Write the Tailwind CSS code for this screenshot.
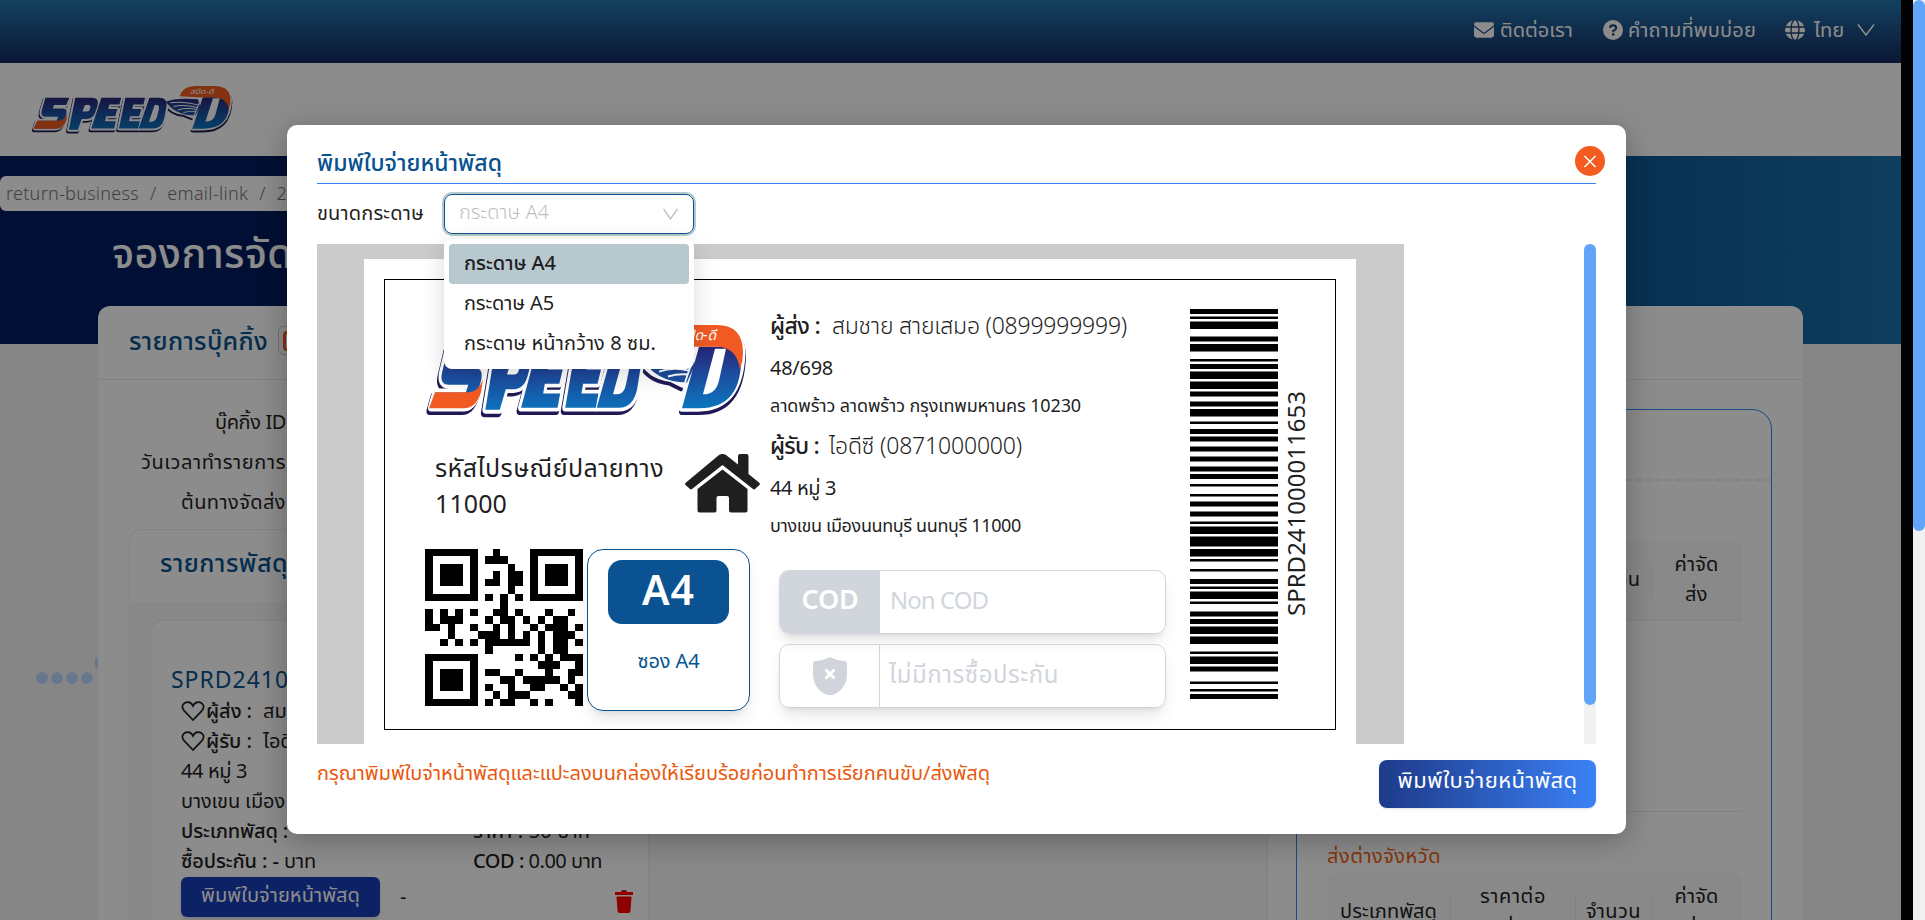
<!DOCTYPE html>
<html lang="th">
<head>
<meta charset="utf-8">
<title>SPEED-D</title>
<script src="https://cdn.jsdelivr.net/npm/@tailwindcss/browser@4"></script>
</head>
<body class="relative h-[920px] w-[1925px] overflow-hidden bg-black font-['Noto_Sans','Noto_Sans_Thai',sans-serif] text-[#1f1f1f]">

<svg class="absolute h-0 w-0">
  <defs>
    <linearGradient id="ink" gradientUnits="userSpaceOnUse" x1="0" y1="22" x2="0" y2="84"><stop offset="0" stop-color="#2b2171"/><stop offset=".45" stop-color="#1d4a9c"/><stop offset="1" stop-color="#0c74bd"/></linearGradient>
    <g id="word">
      <path d="M27 25h45l-6 13H43l-2 6h19q9 0 6 11l-4 11q-5 14-17 14H7l5-14h36l3-7H28q-11 0-8-11z"/>
      <path d="M83 25h31q14 0 11 13l-4 12q-4 13-17 13h-9l-7 19H71z"/>
      <path d="M132 25h37l-3 12h-19l-2 8h17l-4 13h-17l-2 9h20l-3 13h-43z"/>
      <path d="M177 25h37l-3 12h-19l-2 8h17l-4 13h-17l-2 9h20l-3 13h-36z"/>
      <path d="M222 25h18q17 0 14 16l-4 20q-4 19-22 19h-26z"/>
    </g>
    <path id="wing" d="M217 33Q232 24 268 28L279 24 270 62 260 62 248 56Q226 54 217 33z"/>
    <path id="dee" d="M240 22Q246 3 266 3h28q24 0 25 27-2 56-44 56h-16l14-62z"/>
  </defs>
  <symbol id="logo" viewBox="2 0 322 104" preserveAspectRatio="none">
    <g fill="#1f1a55" stroke="#1f1a55" stroke-width="7" stroke-linejoin="round" transform="translate(-1.500 3.500)">
      <use href="#word" transform="matrix(.85 0 0 1.1 2 -2.500)"/><use href="#wing"/><use href="#dee" transform="translate(2 0)"/>
    </g>
    <g fill="#fff" stroke="#fff" stroke-width="7" stroke-linejoin="round">
      <use href="#word" transform="matrix(.85 0 0 1.1 2 -2.500)"/><use href="#wing"/><use href="#dee"/>
    </g>
    <g fill="url(#ink)">
      <use href="#word" transform="matrix(.85 0 0 1.1 2 -2.500)"/>
      <path d="M217 33Q232 24 268 28L272 42 264 60Q232 60 217 33z"/>
      <path fill-rule="evenodd" d="M276 24h30l12 8q2 54-42 54h-17zM292 26l-12 46q13 0 16-14l7-32z"/>
    </g>
    <g fill="#fff"><path d="M88 39l-4 13h7q4 0 5-5 2-8-2-8z"/><path d="M199 39l-9 33h4q7 0 9-10l3-15q1-8-4-8z"/></g>
    <path fill="#f15a22" d="M239 22Q244 2 264 2h30q26 0 26 28 0 9-3 17-3-22-22-23h-28z"/>
    <path fill="#f15a22" d="M12 70h32q12 0 16-14l-2 14q-5 16-16 16H6z"/>
    <g fill="none" stroke="#fff" stroke-width="1.900"><path d="M224 35q22-4 44 4"/><path d="M229 42q18-4 38 2"/><path d="M236 49q14-5 30-1"/><path d="M245 54q10-3 20-2"/><path d="M272 30 262 60"/></g>
    <text x="255" y="17" font-size="14" fill="#fff" font-style="italic" textLength="38" lengthAdjust="spacingAndGlyphs">สปีด-ดี</text>
  </symbol>
  <symbol id="heart" viewBox="0 0 24 20"><path d="M12 19 3 9.600Q.2 6 2.300 3.200 4 1 7 1.100q3.500.2 5 3.700Q13.500 1.300 17 1.100q3-.1 4.700 2.100Q23.800 6 21 9.600z" fill="none" stroke="#1f1f1f" stroke-width="1.700"/></symbol>
</svg>

<!-- Page -->
<div class="flex h-full w-[1901px] flex-col overflow-hidden bg-[#f5f5f5]">
  <header class="flex h-[63px] shrink-0 items-center justify-end bg-linear-to-b from-[#2478b0] to-[#142a60] pb-[3px] pr-[26px] text-[20px] text-white">
    <svg class="mr-[6px] h-[16px] w-[20px]" viewBox="0 0 512 400" preserveAspectRatio="none"><path fill="#fff" d="M48 8C21 8 0 29 0 56c0 15 7 29 19 38l218 163c11 9 27 9 38 0L493 94c12-9 19-23 19-38 0-27-21-48-48-48zM0 120v208c0 35 29 64 64 64h384c35 0 64-29 64-64V120L294 283c-23 17-53 17-76 0z"/></svg>
    <span data-w="73">ติดต่อเรา</span>
    <svg class="ml-[30px] mr-[5px] h-5 w-5" viewBox="0 0 20 20"><circle cx="10" cy="10" r="10" fill="#fff"/><path d="M7 7.800Q7.300 5.200 10.200 5.200q3 .2 3 2.700 0 1.500-3 3.100v1.200" fill="none" stroke="#18416f" stroke-width="2"/><circle cx="10.200" cy="14.500" r="1.300" fill="#18416f"/></svg>
    <span data-w="128">คำถามที่พบบ่อย</span>
    <svg class="ml-[29px] mr-[9px] h-5 w-5" viewBox="0 0 20 20"><circle cx="10" cy="10" r="10" fill="#fff"/><g fill="none" stroke="#18416f" stroke-width="1.300"><ellipse cx="10" cy="10" rx="4" ry="10.500"/><path d="M0 7h20M0 13h20"/></g></svg>
    <span data-w="30">ไทย</span>
    <svg class="ml-[13px] h-[14px] w-[18px]" viewBox="0 0 18 14"><path d="M1 1.500 9 12l8-10.500" fill="none" stroke="#fff" stroke-width="1.500"/></svg>
  </header>
  <div class="flex h-[93px] shrink-0 items-center bg-white pl-[31px]"><svg class="mt-[3px] h-[53px] w-[202px]"><use href="#logo"/></svg></div>
  <section class="flex h-[188px] shrink-0 flex-col bg-linear-to-r from-[#001d5d] from-50% to-[#1b71ab] pt-5">
    <div class="flex h-[35px] w-[700px] items-center rounded-md bg-white pl-[6px] text-[18px] font-light text-[#777]"><span data-w="133">return-business</span><span class="mx-[11px]">/</span><span data-w="81">email-link</span><span class="mx-[11px]">/</span><span>241000011653</span></div>
    <h1 class="mt-[11px] flex h-[62px] items-center pl-[112px] text-[41px] font-medium text-white"><span data-w="228">จองการจัดส่ง</span></h1>
  </section>
  <main class="relative -mt-[38px] ml-[98px] h-[700px] w-[1705px] shrink-0 rounded-xl bg-white">
    <div class="flex h-[74px] items-center border-b border-[#ebebeb] pb-1 pl-[31px] text-[25px] font-medium text-[#08528f]">
      <span data-w="139">รายการบุ๊คกิ้ง</span>
      <span class="ml-[10px] flex size-[29px] items-center rounded-md border border-[#ccc] pl-1"><span class="h-5 w-[18px] rounded border-[3px] border-[#f15a22]"></span></span>
    </div>
    <div class="flex">
      <div class="ml-[31px] w-[1139px] pt-[22px] text-[20px]">
        <div class="flex w-[157px] flex-col items-end">
          <div class="flex h-10 items-center"><span data-w="71">บุ๊คกิ้ง ID</span></div>
          <div class="flex h-10 items-center"><span data-w="145">วันเวลาทำรายการ</span></div>
          <div class="flex h-10 items-center"><span data-w="105">ต้นทางจัดส่ง</span></div>
        </div>
        <section class="mt-[7px] h-[400px] rounded-xl border border-[#ededed] bg-[#f7f7f7]">
          <div class="flex h-[72px] items-center rounded-t-xl bg-white pb-[6px] pl-[30px] text-[25px] font-medium text-[#08528f]"><span data-w="128">รายการพัสดุ</span></div>
          <div class="ml-[20px] mt-[18px] h-[340px] w-[499px] rounded-xl border border-[#ededed] bg-white pt-[41px]">
            <div class="flex h-[35px] items-center pl-5 text-[23px] text-[#08528f]"><span data-w="231">SPRD241000011653</span></div>
            <div class="-mt-px pl-[30px]">
              <div class="flex h-[30px] items-center"><svg class="mr-px h-[22px] w-6"><use href="#heart"/></svg><b class="mr-[11px] font-medium" data-w="46">ผู้ส่ง :</b><span>สมชาย</span></div>
              <div class="flex h-[30px] items-center"><svg class="mr-px h-[22px] w-6"><use href="#heart"/></svg><b class="mr-[11px] font-medium" data-w="46">ผู้รับ :</b><span>ไอดีซี</span></div>
              <div class="flex h-[30px] items-center"><span data-w="66">44 หมู่ 3</span></div>
              <div class="flex h-[30px] items-center"><span data-w="104">บางเขน เมือง</span></div>
              <div class="flex h-[30px] items-center"><b class="w-[292px] font-medium"><span data-w="107">ประเภทพัสดุ :</span></b><span data-w="117"><b class="font-medium">ราคา :</b> 50 บาท</span></div>
              <div class="flex h-[30px] items-center"><span class="w-[292px]"><span data-w="135"><b class="font-medium">ซื้อประกัน : -</b> บาท</span></span><span data-w="129"><b class="font-medium">COD :</b> 0.00 บาท</span></div>
              <div class="mt-px flex h-10 items-center">
                <span class="flex h-10 w-[199px] items-center justify-center rounded-md bg-blue-800 pb-1 text-white shadow-md"><span data-w="159">พิมพ์ใบจ่ายหน้าพัสดุ</span></span>
                <span class="ml-[20px] w-[215px]">-</span>
                <svg class="mt-2 h-[23px] w-[18px]" viewBox="0 0 18 23"><path fill="#f00" d="M0 2h6l1-2h4l1 2h6v3H0zM1.500 6.500h15L15.500 21q-.2 2-2 2h-9q-1.800 0-2-2z"/></svg>
              </div>
            </div>
          </div>
        </section>
      </div>
      <aside class="ml-[28px] mt-[29px] h-[600px] w-[476px] rounded-[20px] border border-[#3b82f6] text-[20px]">
        <div class="h-[71px] border-b-2 border-dashed border-[#ededed]"></div>
        <div class="ml-[30px] mt-[60px] w-[415px]">
          <div class="flex h-[80px] items-center rounded-t-lg border-b border-[#ebebeb] bg-[#f9f9f9]">
            <span class="w-[248px]"></span>
            <span class="flex w-[76px] justify-center pb-1"><span data-w="55">จำนวน</span></span><span class="h-8 w-px bg-[#ebebeb]"></span>
            <span class="flex w-[89px] flex-col items-center pb-1 leading-[30px]"><span data-w="44">ค่าจัด</span><span data-w="23">ส่ง</span></span>
          </div>
          <div class="h-[191px] border-b border-[#ebebeb]"></div>
          <div class="mt-[26px] flex h-[36px] items-center text-[#f2600f]"><span data-w="114">ส่งต่างจังหวัด</span></div>
          <div class="mt-[-1px] flex h-[80px] items-center rounded-t-lg bg-[#f9f9f9] pb-1">
            <span class="flex w-[123px] justify-center"><span data-w="97">ประเภทพัสดุ</span></span><span class="h-8 w-px bg-[#ebebeb]"></span>
            <span class="flex w-[124px] flex-col items-center leading-[30px]"><span data-w="66">ราคาต่อ</span><span>กล่อง</span></span><span class="h-8 w-px bg-[#ebebeb]"></span>
            <span class="flex w-[75px] justify-center"><span data-w="55">จำนวน</span></span><span class="h-8 w-px bg-[#ebebeb]"></span>
            <span class="flex w-[89px] flex-col items-center leading-[30px]"><span data-w="44">ค่าจัด</span><span data-w="23">ส่ง</span></span>
          </div>
        </div>
      </aside>
    </div>
  </main>
</div>
<!-- Truck trail dots in the page margin -->
<div class="absolute left-9 top-[672px] flex gap-[3px]"><i class="size-3 rounded-full bg-blue-200"></i><i class="size-3 rounded-full bg-blue-200"></i><i class="size-3 rounded-full bg-blue-200"></i><i class="size-3 rounded-full bg-blue-200"></i></div>
<div class="absolute left-[95px] top-[657px] h-3 w-[3px] rounded-l-full bg-blue-200"></div>

<div class="absolute inset-y-0 left-0 w-[1913px] bg-black/45"></div>
<!-- Page scrollbar -->
<div class="absolute right-0 top-0 h-full w-3 bg-[#f1f1f1]"><div class="h-[531px] rounded-full bg-[#60a5fa]"></div></div>

<!-- Print dialog -->
<div class="absolute left-[287px] top-[125px] flex h-[709px] w-[1339px] flex-col rounded-[10px] bg-white px-[30px] shadow-[0_6px_30px_rgba(0,0,0,.28)]">
  <div class="flex h-[59px] shrink-0 items-end justify-between border-b border-[#3b82f6] text-[23px] font-medium text-[#08528f]">
    <span class="flex h-[41px] items-center"><span data-w="185">พิมพ์ใบจ่ายหน้าพัสดุ</span></span>
    <svg class="-mr-[9px] mb-[7px] size-[30px]" viewBox="0 0 30 30"><circle cx="15" cy="15" r="15" fill="#f45b20"/><path d="m9.500 10 11 11m0-11-11 11" stroke="#fff" stroke-width="1.500"/></svg>
  </div>
  <div class="flex h-[60px] shrink-0 items-center text-[20px]">
    <span class="w-[127px] pb-[3px]"><span data-w="107">ขนาดกระดาษ</span></span>
    <div class="flex h-10 w-[250px] items-center justify-between rounded-lg border border-[#08528f] pl-[14px] pr-[15px] font-light text-[#bfbfbf] ring-2 ring-[#b8c8cf]"><span class="-mt-[4px]" data-w="90">กระดาษ A4</span><svg class="h-[12px] w-[15px]" viewBox="0 0 15 12"><path d="m.5.8 7 10 7-10" fill="none" stroke="#bbb" stroke-width="1.300"/></svg></div>
  </div>
  <div class="flex h-[500px] shrink-0 justify-between">
    <div class="h-[500px] w-[1087px] bg-[#cbcbcb] pl-[47px] pt-[15px]">
      <div class="h-[485px] w-[992px] bg-white pl-5 pt-5">
        <div class="flex h-[451px] w-[952px] border border-black">
          <div class="w-[385px] pl-8">
            <div class="flex h-[169px] items-start pl-[8px] pt-[43px]"><svg class="h-[103px] w-[322px]"><use href="#logo"/></svg></div>
            <div class="flex h-[100px]">
              <div class="flex w-[268px] flex-col items-start pl-[18px] text-[25px] leading-[36px]"><span data-w="229">รหัสไปรษณีย์ปลายทาง</span><span data-w="72">11000</span></div>
              <svg class="mt-[5px] h-[59px] w-[75px]" viewBox="0 0 75 59"><path fill="#1f1f1f" d="M34 1q3.500-2 7 0l12 9.500V2q0-2 2-2h6.500q2 0 2 2v18l10.500 8.500q1.500 1 .5 2.500L70.500 34.500q-1 1.500-2.500.5L37.500 11 7 35q-1.500 1-2.500-.5L.5 31q-1-1.500.5-2.500zM37.500 15.500 62.500 35v21.500q0 2-2 2H46q-2 0-2-2V44q0-2-2-2h-8.500q-2 0-2 2v12.500q0 2-2 2H14.500q-2 0-2-2V35z"/></svg>
            </div>
            <div class="flex pl-2">
              <svg id="qr" class="h-[157px] w-[158px]" viewBox="0 0 21 21" preserveAspectRatio="none" shape-rendering="crispEdges"></svg>
              <div class="ml-1 flex h-[162px] w-[163px] flex-col items-center rounded-2xl border border-[#08528f] pt-[10px] text-[#08528f] shadow-lg">
                <div class="flex h-16 w-[121px] items-center justify-center rounded-[14px] bg-[#0a5291] pb-1 text-[41px] font-semibold text-white"><span data-w="53">A4</span></div>
                <div class="mt-[21px] flex h-8 items-center text-[20px]"><span data-w="62">ซอง A4</span></div>
              </div>
            </div>
          </div>
          <div class="w-[420px] pt-[22px]">
            <div class="flex h-[46px] items-center text-[23px] font-light"><b class="mr-3 font-medium" data-w="50">ผู้ส่ง :</b><span data-w="295">สมชาย สายเสมอ (0899999999)</span></div>
            <div class="flex h-[39px] items-center pt-px text-[20px]"><span data-w="63">48/698</span></div>
            <div class="flex h-[36px] items-center text-[18px]"><span data-w="311">ลาดพร้าว ลาดพร้าว กรุงเทพมหานคร 10230</span></div>
            <div class="flex h-[45px] items-center text-[23px] font-light"><b class="mr-[10px] font-medium" data-w="49">ผู้รับ :</b><span data-w="193">ไอดีซี (0871000000)</span></div>
            <div class="flex h-[39px] items-center pt-px text-[20px]"><span data-w="66">44 หมู่ 3</span></div>
            <div class="flex h-[36px] items-center text-[18px]"><span data-w="251">บางเขน เมืองนนทบุรี นนทบุรี 11000</span></div>
            <div class="ml-[9px] mt-[27px] flex h-16 w-[387px] overflow-hidden rounded-[10px] border border-gray-300 text-[24px] text-gray-300 shadow-lg">
              <div class="flex w-[100px] items-center justify-center bg-gray-300 pb-[5px] text-[27px] font-semibold text-white"><span data-w="57">COD</span></div>
              <div class="flex items-center pb-[5px] pl-[10px]"><span data-w="98">Non COD</span></div>
            </div>
            <div class="ml-[9px] mt-[10px] flex h-16 w-[387px] rounded-[10px] border border-gray-300 text-[24px] text-gray-300 shadow-lg">
              <div class="flex w-[100px] items-center justify-center border-r border-gray-300"><svg class="h-[38px] w-[34px]" viewBox="0 0 34 38"><path fill="#d1d5db" d="M17 0q8 4 15 4 2 .5 2 3v10q0 14-13 20.500-4 1-8 0Q0 31 0 17V7q0-2.500 2-3 7 0 15-4z"/><path d="m12.500 12.500 9 9m0-9-9 9" stroke="#fff" stroke-width="3"/></svg></div>
              <div class="flex items-center pb-[5px] pl-[9px]"><span data-w="170">ไม่มีการซื้อประกัน</span></div>
            </div>
          </div>
          <div class="flex pt-[29px]">
            <svg id="bars" class="h-[390px] w-[88px]" viewBox="0 0 1 156" preserveAspectRatio="none"></svg>
            <div class="ml-[2px] mt-[82px] flex h-[226px] w-[32px] rotate-180 items-center justify-center text-[24px] [writing-mode:vertical-rl]">SPRD241000011653</div>
          </div>
        </div>
      </div>
    </div>
    <div class="h-full w-3 bg-[#f1f1f1]"><div class="h-[461px] rounded-full bg-[#60a5fa]"></div></div>
  </div>
  <div class="flex justify-between pt-[15px]">
    <div class="flex h-[27px] items-center text-[20px] text-[#ea580c]"><span data-w="673">กรุณาพิมพ์ใบจ่าหน้าพัสดุและแปะลงบนกล่องให้เรียบร้อยก่อนทำการเรียกคนขับ/ส่งพัสดุ</span></div>
    <div class="mt-px flex h-12 w-[217px] items-center justify-center rounded-lg bg-linear-to-r from-[#1e3a8a] to-[#3b82f6] pb-[10px] text-[22px] text-white shadow"><span data-w="180">พิมพ์ใบจ่ายหน้าพัสดุ</span></div>
  </div>
</div>

<!-- Paper size menu -->
<div class="absolute left-[444px] top-[239px] flex h-[130px] w-[250px] flex-col rounded-lg bg-white p-[5px] text-[20px] shadow-[0_6px_24px_rgba(0,0,0,.15)]">
  <div class="flex h-10 items-center rounded bg-[#b8c8cf] pb-[3px] pl-[15px] font-medium"><span data-w="92">กระดาษ A4</span></div>
  <div class="flex h-10 items-center pb-[3px] pl-[15px]"><span data-w="90">กระดาษ A5</span></div>
  <div class="flex h-10 items-center pb-[3px] pl-[15px]"><span data-w="192">กระดาษ หน้ากว้าง 8 ซม.</span></div>
</div>

<script>
const qrRows = [
 "111111100100001111111","100000101110001000001","101110100001001011101","101110100101101011101","101110101101101011101","100000100001001000001","111111101010101111111",
 "000000000010000000000","101010100110100010010","101110001011010101100","110100100101001011101","000100011101010101110","001010101111110101101","000000001000000101100",
 "111111100000101010111","100000100000000111001","101110101100100010011","101110100011011111010","101110101001001100101","100000100101110000011","111111101011001010001"];
document.getElementById('qr').innerHTML = '<path d="' + qrRows.map((r, y) => [...r].map((c, x) => c === '1' ? `M${x} ${y}h1v1h-1z` : '').join('')).join('') + '"/>';
const bars = [0,2,3,4,5,8,11,13,14,17,20,21,22,24,25,28,29,32,33,35,37,39,40,43,45,46,48,50,51,53,55,57,59,61,63,65,66,68,70,71,74,75,77,79,81,83,85,86,87,90,91,95,96,99,100,101,104,105,108,110,111,112,113,116,117,118,121,123,124,126,127,130,131,134,137,138,139,142,143,145,149,150,152,153,154,156];
let d = '';
for (let i = 0; i < bars.length; i += 2) d += `M0 ${bars[i]}h1v${bars[i + 1] - bars[i]}h-1z`;
document.getElementById('bars').innerHTML = `<path d="${d}"/>`;
function fit() {
  document.querySelectorAll('[data-w]').forEach(e => {
    e.style.whiteSpace = 'nowrap';
    e.style.flexShrink = 0;
    const w = () => { const r = document.createRange(); r.selectNodeContents(e); return r.getBoundingClientRect().width; };
    e.style.letterSpacing = '0px';
    const a = w();
    e.style.letterSpacing = '1px';
    const n = w() - a;
    if (n > 0) e.style.letterSpacing = (e.dataset.w - a) / n + 'px';
  });
}
fit();
addEventListener('load', () => { fit(); requestAnimationFrame(fit); });
document.fonts.ready.then(fit);
</script>
</body>
</html>
